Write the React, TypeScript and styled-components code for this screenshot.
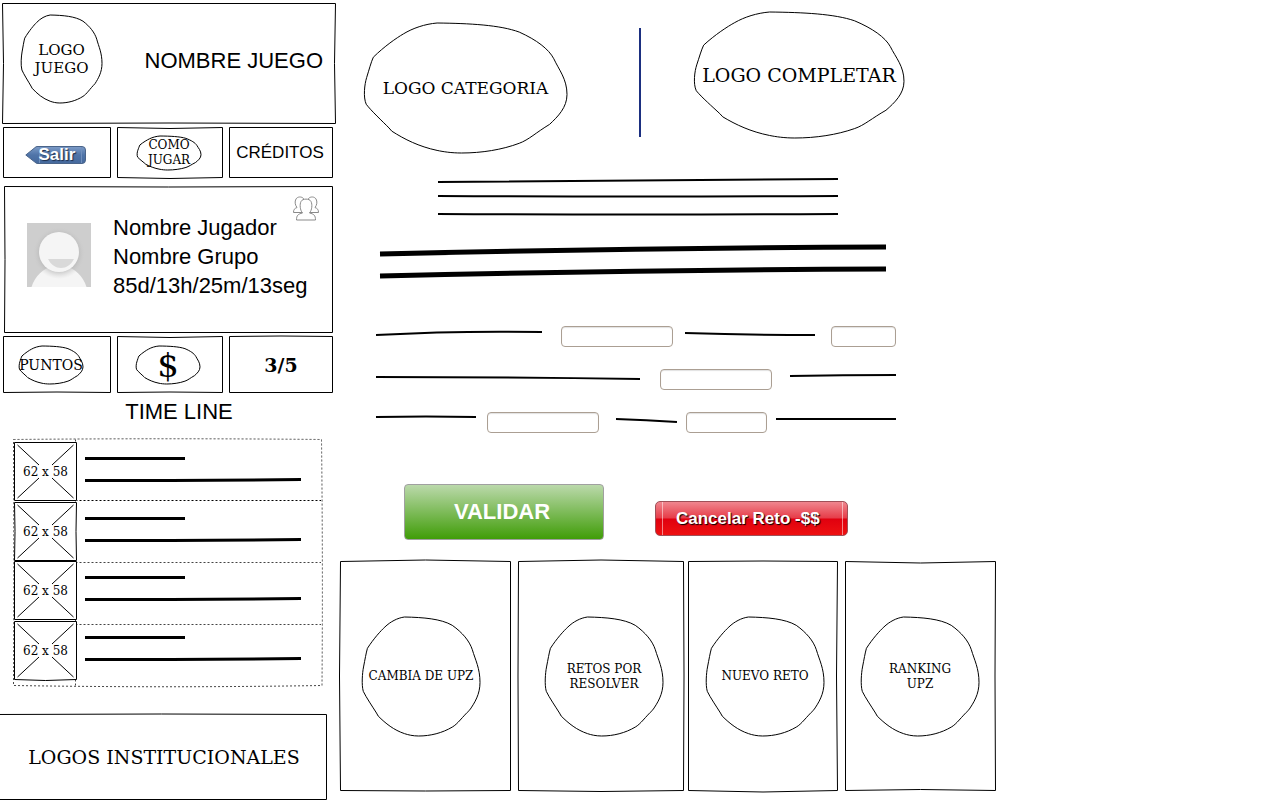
import React from "react";
import styled, { createGlobalStyle } from "styled-components";

const GlobalStyle = createGlobalStyle`
  * { box-sizing: border-box; }
  body { margin: 0; background: #fff; color: #000; font-family: "DejaVu Serif", serif; }
  button { font: inherit; color: inherit; background: none; border: 0; padding: 0; cursor: pointer; }
  h1, h2, p, ul { margin: 0; padding: 0; font-weight: normal; list-style: none; }
`;

const sans = `"Liberation Sans", Arial, sans-serif`;

/* ---------- hand-drawn primitives ---------- */

const Overlay = styled.svg`
  position: absolute;
  inset: 0;
  width: 100%;
  height: 100%;
  overflow: visible;
  pointer-events: none;
  fill: none;
  stroke: #000;
  path { vector-effect: non-scaling-stroke; }
`;

type Bow = [number, number, number, number];

function SketchFrame({ w, h, bow = [0, 0, 0, 0] }: { w: number; h: number; bow?: Bow }) {
  const [t, r, b, l] = bow;
  const x2 = w - 0.5;
  const y2 = h - 0.5;
  const d = `M.5 .5Q${w / 2} ${0.5 + t} ${x2} .5Q${x2 + r} ${h / 2} ${x2} ${y2}Q${w / 2} ${y2 + b} .5 ${y2}Q${0.5 + l} ${h / 2} .5 .5Z`;
  return (
    <Overlay viewBox={`0 0 ${w} ${h}`} preserveAspectRatio="none" aria-hidden="true">
      <path d={d} />
    </Overlay>
  );
}

const BLOB =
  "M36 0C52 .3 67 1.5 76.5 7C85 13 91 20 93.5 27.5C96 36 100 43 100 55C100 65 95.5 72 91.4 78C85 84 81 90 76.5 92.5C68 97.5 58 100 48 100C43 100 39 99 36 98C27 95 20 89.5 13.7 83.2L12.3 80.7C9 75.5 3.5 67.500 1.1 62.5C-.5 57 .3 47 1.3 42C2.5 36 3.5 30 4.6 26.3C10 18 16 11.5 19.4 8.4C24 4 30 .8 36 0Z";

const BlobBox = styled.span<{ $w: number; $h: number; $size: number; $line: number }>`
  position: relative;
  display: flex;
  flex: none;
  align-items: center;
  justify-content: center;
  width: ${(p) => p.$w}px;
  height: ${(p) => p.$h}px;
  text-align: center;
  white-space: pre;
  font-size: ${(p) => p.$size}px;
  line-height: ${(p) => p.$line}px;
`;

interface BlobProps {
  w: number;
  h: number;
  size: number;
  line: number;
  children: React.ReactNode;
}

function Blob({ w, h, size, line, children }: BlobProps) {
  return (
    <BlobBox $w={w} $h={h} $size={size} $line={line}>
      <Overlay viewBox="0 0 100 100" preserveAspectRatio="none" aria-hidden="true">
        <path d={BLOB} />
      </Overlay>
      {children}
    </BlobBox>
  );
}

const StrokeSvg = styled.svg<{ $ml: number }>`
  display: block;
  flex: none;
  margin-left: ${(p) => p.$ml}px;
  overflow: visible;
  fill: none;
  stroke: #000;
`;

function Scribble({ w, h, d, weight = 2, ml = 0 }: { w: number; h: number; d: string; weight?: number; ml?: number }) {
  return (
    <StrokeSvg $ml={ml} width={w} height={h} viewBox={`0 0 ${w} ${h}`} strokeWidth={weight} aria-hidden="true">
      <path d={d} />
    </StrokeSvg>
  );
}

/* ---------- layout ---------- */

const Page = styled.div`
  display: flex;
  align-items: flex-start;
  overflow-x: hidden;
`;

const Sidebar = styled.aside`
  flex: none;
  width: 336px;
  padding-top: 3px;
`;

const Main = styled.main`
  flex: 1;
  min-width: 0;
  max-width: 664px;
`;

const GameHeader = styled.header`
  position: relative;
  display: flex;
  align-items: center;
  justify-content: space-between;
  min-height: 121px;
  margin-left: 2px;
  padding: 0 13px 10px 19px;
`;

const GameTitle = styled.h1`
  font: 22px/26px ${sans};
  padding-top: 4px;
`;

const BoxRow = styled.div<{ $top: number }>`
  display: flex;
  gap: 6px;
  margin: ${(p) => p.$top}px 3px 0;
`;

const BoxBase = `
  position: relative;
  display: flex;
  align-items: center;
  justify-content: center;
`;

const BoxButton = styled.button<{ $w: number }>`
  ${BoxBase}
  flex: 0 0 ${(p) => p.$w}px;
  height: 51px;
  padding-right: 2px;
`;

const StatBox = styled.div<{ $w: number; $start?: boolean }>`
  ${BoxBase}
  flex: 0 0 ${(p) => p.$w}px;
  min-height: 57px;
  padding: 1px 4px 0 0;
  ${(p) => p.$start && "justify-content: flex-start; padding-left: 16px;"}
`;

const Credits = styled.span`
  font: 17px/20px ${sans};
  padding-top: 1px;
`;

const StatValue = styled.strong`
  padding-left: 4px;
  font-size: 19px;
  line-height: 22px;
`;

const ExitTag = styled.span`
  position: relative;
  display: block;
  width: 61px;
  height: 18px;
  margin: 4px 2px 0 0;
  padding-left: 14px;
  text-align: left;
  color: #fff;
  font: bold 17px/18px ${sans};
  text-shadow: 1px 1px 1px #1c2c48;
  svg { position: absolute; inset: 0; }
  b { position: relative; }
`;

const PlayerCard = styled.section`
  position: relative;
  display: flex;
  align-items: flex-start;
  min-height: 147px;
  margin: 8px 3px 0 4px;
  padding: 26px 0 0 23px;
`;

const Avatar = styled.svg`
  flex: none;
  display: block;
  margin-top: 11px;
`;

const PlayerInfo = styled.div`
  padding: 1px 0 0 22px;
  font: 22px/29px ${sans};
`;

const GroupIcon = styled.svg`
  position: absolute;
  top: 10px;
  right: 13px;
`;

const TimelineTitle = styled.h2`
  font: 22px/26px ${sans};
  margin: 6px 0 14px;
  padding-left: 22px;
  text-align: center;
`;

const Timeline = styled.div`
  position: relative;
  min-height: 248px;
  margin: 0 13px;
  padding: 3px 0 7px 1px;
`;

const TimelineList = styled.ul`
  display: grid;
  grid-auto-rows: 1fr;
  min-height: 238px;
`;

const TimelineItem = styled.li`
  display: flex;
  gap: 8px;
`;

const Thumb = styled.div`
  position: relative;
  display: flex;
  align-items: center;
  justify-content: center;
  width: 63px;
  height: 59px;
  padding-top: 2px;
  background: #fff;
  font-size: 12px;
  line-height: 15px;
  white-space: nowrap;
`;

const Footer = styled.footer`
  position: relative;
  display: flex;
  align-items: center;
  justify-content: center;
  min-height: 86px;
  margin: 27px 9px 0 -4px;
  padding-left: 5px;
  font-size: 19px;
  line-height: 22px;
`;

const Logos = styled.div`
  display: flex;
  align-items: flex-start;
  padding: 12px 0 0 28px;
`;

const LogoSlot = styled.div<{ $top: number }>`
  margin-top: ${(p) => p.$top}px;
`;

const Divider = styled.div`
  width: 2px;
  height: 109px;
  margin: 16px 53px 0 72px;
  background: #1b2f80;
`;

const Statement = styled.div`
  padding: 24px 0 0 102px;
`;

const Emphasis = styled.div`
  padding: 24px 0 0 44px;
`;

const Blanks = styled.form`
  display: grid;
  row-gap: 22px;
  padding: 45px 0 0 40px;
`;

const BlankRow = styled.div`
  display: flex;
  height: 21px;
`;

const Blank = styled.input<{ $w: number; $ml: number }>`
  flex: none;
  width: ${(p) => p.$w}px;
  height: 21px;
  margin-left: ${(p) => p.$ml}px;
  padding: 0 4px;
  border: 1px solid #ab9f93;
  border-radius: 4px;
  background: #fff;
  box-shadow: inset 0 1px 1px #e2e2e2;
  font: 14px/18px ${sans};
`;

const Actions = styled.div`
  display: flex;
  align-items: flex-start;
  gap: 51px;
  padding: 51px 0 0 68px;
`;

const Validate = styled.button`
  width: 200px;
  height: 56px;
  padding-right: 4px;
  border: 1px solid #a0a0a0;
  border-radius: 4px;
  background: linear-gradient(#bbd9ab, #409d08);
  color: #fff;
  font: bold 22px/26px ${sans};
`;

const Cancel = styled.button`
  width: 193px;
  height: 35px;
  margin-top: 17px;
  padding: 0 0 0 20px;
  text-align: left;
  border: 1px solid #a05058;
  border-radius: 5px;
  background:
    linear-gradient(#ffffff80, #ffffff80) 6px 0 / 1px 100% no-repeat,
    linear-gradient(#ffffff80, #ffffff80) 186px 0 / 1px 100% no-repeat,
    linear-gradient(#f0868e, #e63c48 49%, #e0000f 51%, #ee1111);
  color: #fff;
  font: bold 17px/20px ${sans};
  text-shadow: 1px 1px 1px #000;
`;

const Cards = styled.nav`
  display: flex;
  padding: 21px 0 0 4px;
`;

const Card = styled.button<{ $w: number; $ml: number; $pad: number }>`
  position: relative;
  flex: none;
  display: flex;
  width: ${(p) => p.$w}px;
  height: 230px;
  margin-left: ${(p) => p.$ml}px;
  padding: 56px 0 0 ${(p) => p.$pad}px;
`;

/* ---------- content ---------- */

const cards: { label: string; w: number; ml: number; pad: number; bow: Bow }[] = [
  { label: "CAMBIA DE UPZ", w: 171, ml: 0, pad: 22, bow: [-3, 0, 1, -2] },
  { label: "RETOS POR\nRESOLVER", w: 166, ml: 7, pad: 27, bow: [-3, 1, 2, -1] },
  { label: "NUEVO RETO", w: 150, ml: 4, pad: 18, bow: [-1, -2, 3, 0] },
  { label: "RANKING\nUPZ", w: 151, ml: 7, pad: 16, bow: [3, -1, -2, 0] },
];

function TimelineGrid() {
  return (
    <Overlay viewBox="0 0 310 248" preserveAspectRatio="none" strokeDasharray="2 2" aria-hidden="true">
      <path d="M.5 .5Q155 -1 308.5 .5Q310 124 309 246.5Q155 249 .5 246.5Q1 124 .5 .5Z" stroke="#444" />
      <path d="M62.5 .5V246.5M62.5 123.5H308M62.5 185.5H308" stroke="#444" />
      <path d="M62.5 61.5H308" />
    </Overlay>
  );
}

export default function App() {
  return (
    <>
      <GlobalStyle />
      <Page>
        <Sidebar>
          <GameHeader>
            <SketchFrame w={334} h={121} bow={[0, -2, -1, 2]} />
            <Blob w={81} h={88} size={15} line={18}>{"LOGO\nJUEGO"}</Blob>
            <GameTitle>NOMBRE JUEGO</GameTitle>
          </GameHeader>

          <BoxRow $top={3}>
            <BoxButton type="button" $w={108}>
              <SketchFrame w={108} h={51} />
              <ExitTag>
                <svg width="61" height="18" viewBox="0 0 61 18" aria-hidden="true">
                  <defs>
                    <linearGradient id="exit" x1="0" y1="0" x2="0" y2="1">
                      <stop offset="0" stopColor="#7d9cc8" />
                      <stop offset=".5" stopColor="#4f74a8" />
                      <stop offset="1" stopColor="#45699d" />
                    </linearGradient>
                  </defs>
                  <path
                    d="M.8 9L11 .8Q12 .5 13 .5H57Q60.5 .5 60.5 4V14Q60.5 17.5 57 17.5H13Q12 17.5 11 17Z"
                    fill="url(#exit)"
                    stroke="#4a6489"
                  />
                  <path d="M14.5 1V17M56.5 1V17" stroke="#6f8fbd" />
                </svg>
                <b>Salir</b>
              </ExitTag>
            </BoxButton>
            <BoxButton type="button" $w={106}>
              <SketchFrame w={106} h={51} bow={[2, 0, 2, 0]} />
              <Blob w={64} h={34} size={12} line={15}>{"COMO\nJUGAR"}</Blob>
            </BoxButton>
            <BoxButton type="button" $w={104}>
              <SketchFrame w={104} h={51} />
              <Credits>CRÉDITOS</Credits>
            </BoxButton>
          </BoxRow>

          <PlayerCard>
            <SketchFrame w={329} h={147} bow={[1, 0, 0, 1]} />
            <Avatar width="64" height="64" viewBox="0 0 64 64" role="img" aria-label="Avatar">
              <defs>
                <radialGradient id="halo" cx=".5" cy=".5" r=".5">
                  <stop offset=".7" stopColor="#aaa" stopOpacity=".6" />
                  <stop offset="1" stopColor="#ccc" stopOpacity="0" />
                </radialGradient>
              </defs>
              <rect width="64" height="64" fill="#cecece" />
              <path d="M4.5 64C8 53 16 46 25 43H39C48 46 56 53 59.5 64Z" fill="#f5f5f5" />
              <circle cx="32" cy="30" r="26" fill="url(#halo)" />
              <circle cx="32" cy="29" r="20" fill="#f5f5f5" />
              <path d="M21 36H47C44 42 39 45 34 45S24 42 21 36Z" fill="#d9d9d9" />
            </Avatar>
            <PlayerInfo>
              <p>Nombre Jugador</p>
              <p>Nombre Grupo</p>
              <p>85d/13h/25m/13seg</p>
            </PlayerInfo>
            <GroupIcon width="28" height="25" viewBox="0 0 28 25" fill="#fff" stroke="#8a8a8a" role="img" aria-label="Grupo">
              <path d="M9 16.5H1.5C1.5 13.5 2.5 12.5 5 11.5C3 9 2.5 5.5 4 3C5.5 .5 9.5 .3 11.5 2.5V16.5Z" />
              <path d="M19 16.5H26.5C26.5 13.5 25.5 12.5 23 11.5C25 9 25.5 5.5 24 3C22.5 .5 18.5 .3 16.5 2.5V16.5Z" />
              <path d="M4.500 24C4.5 19.5 6 18 10.5 17C8 14 7.500 8.5 9 5.5C10.500 2.3 17.5 2.3 19 5.5C20.5 8.5 20 14 17.500 17C22 18 23.5 19.500 23.5 24Z" />
            </GroupIcon>
          </PlayerCard>

          <BoxRow $top={3}>
            <StatBox $w={108} $start>
              <SketchFrame w={108} h={57} bow={[0, 0, -1, 0]} />
              <Blob w={64} h={38} size={14} line={16}>PUNTOS</Blob>
            </StatBox>
            <StatBox $w={106}>
              <SketchFrame w={106} h={57} bow={[2, 0, -1, 0]} />
              <Blob w={64} h={38} size={34} line={38}>$</Blob>
            </StatBox>
            <StatBox $w={104}>
              <SketchFrame w={104} h={57} bow={[-1, 0, 0, 0]} />
              <StatValue>3/5</StatValue>
            </StatBox>
          </BoxRow>

          <TimelineTitle>TIME LINE</TimelineTitle>
          <Timeline>
            <TimelineGrid />
            <TimelineList>
              {[0, 1, 2, 3].map((i) => (
                <TimelineItem key={i}>
                  <Thumb>
                    <SketchFrame w={63} h={59} bow={[0, i === 1 ? -1 : 0, i === 3 ? 2 : 0, i === 1 ? 1 : 0]} />
                    <Overlay viewBox="0 0 63 59" aria-hidden="true">
                      <path d="M3.5 3L25 23M59.5 3L38 23M3.5 56L25 36M59.5 56L38 36" />
                    </Overlay>
                    62 x 58
                  </Thumb>
                  <Scribble w={216} h={59} weight={3} d="M0 16.5H100M0 38.5Q110 38.5 216 37.5" />
                </TimelineItem>
              ))}
            </TimelineList>
          </Timeline>

          <Footer>
            <SketchFrame w={331} h={86} bow={[-1, 0, 0, 0]} />
            LOGOS INSTITUCIONALES
          </Footer>
        </Sidebar>

        <Main>
          <Logos>
            <LogoSlot $top={11}>
              <Blob w={203} h={130} size={17} line={20}>LOGO CATEGORIA</Blob>
            </LogoSlot>
            <Divider />
            <Blob w={210} h={126} size={19} line={22}>LOGO COMPLETAR</Blob>
          </Logos>

          <Statement>
            <Scribble w={400} h={46} d="M0 5Q200 3.5 400 2M0 19Q200 20 400 19M0 37Q200 38 400 37" />
          </Statement>
          <Emphasis>
            <Scribble w={506} h={34} weight={5} d="M0 7Q250 1 506 0M0 29Q250 23 506 22" />
          </Emphasis>

          <Blanks>
            <BlankRow>
              <Scribble w={166} h={21} d="M0 9Q80 4.5 166 6" />
              <Blank $w={112} $ml={19} aria-label="Respuesta 1" />
              <Scribble w={130} h={21} ml={12} d="M0 7Q65 9 130 9" />
              <Blank $w={65} $ml={16} aria-label="Respuesta 2" />
            </BlankRow>
            <BlankRow>
              <Scribble w={264} h={21} d="M0 8Q132 8 264 10" />
              <Blank $w={112} $ml={20} aria-label="Respuesta 3" />
              <Scribble w={106} h={21} ml={18} d="M0 7Q53 6 106 6" />
            </BlankRow>
            <BlankRow>
              <Scribble w={100} h={21} d="M0 5Q50 4 100 5" />
              <Blank $w={112} $ml={11} aria-label="Respuesta 4" />
              <Scribble w={61} h={21} ml={17} d="M0 7Q30 8 61 10" />
              <Blank $w={81} $ml={9} aria-label="Respuesta 5" />
              <Scribble w={120} h={21} ml={9} d="M0 7H120" />
            </BlankRow>
          </Blanks>

          <Actions>
            <Validate type="button">VALIDAR</Validate>
            <Cancel type="button">Cancelar Reto -$$</Cancel>
          </Actions>

          <Cards>
            {cards.map((c) => (
              <Card key={c.label} type="button" $w={c.w} $ml={c.ml} $pad={c.pad}>
                <SketchFrame w={c.w} h={230} bow={c.bow} />
                <Blob w={118} h={119} size={12} line={15}>{c.label}</Blob>
              </Card>
            ))}
          </Cards>
        </Main>
      </Page>
    </>
  );
}
